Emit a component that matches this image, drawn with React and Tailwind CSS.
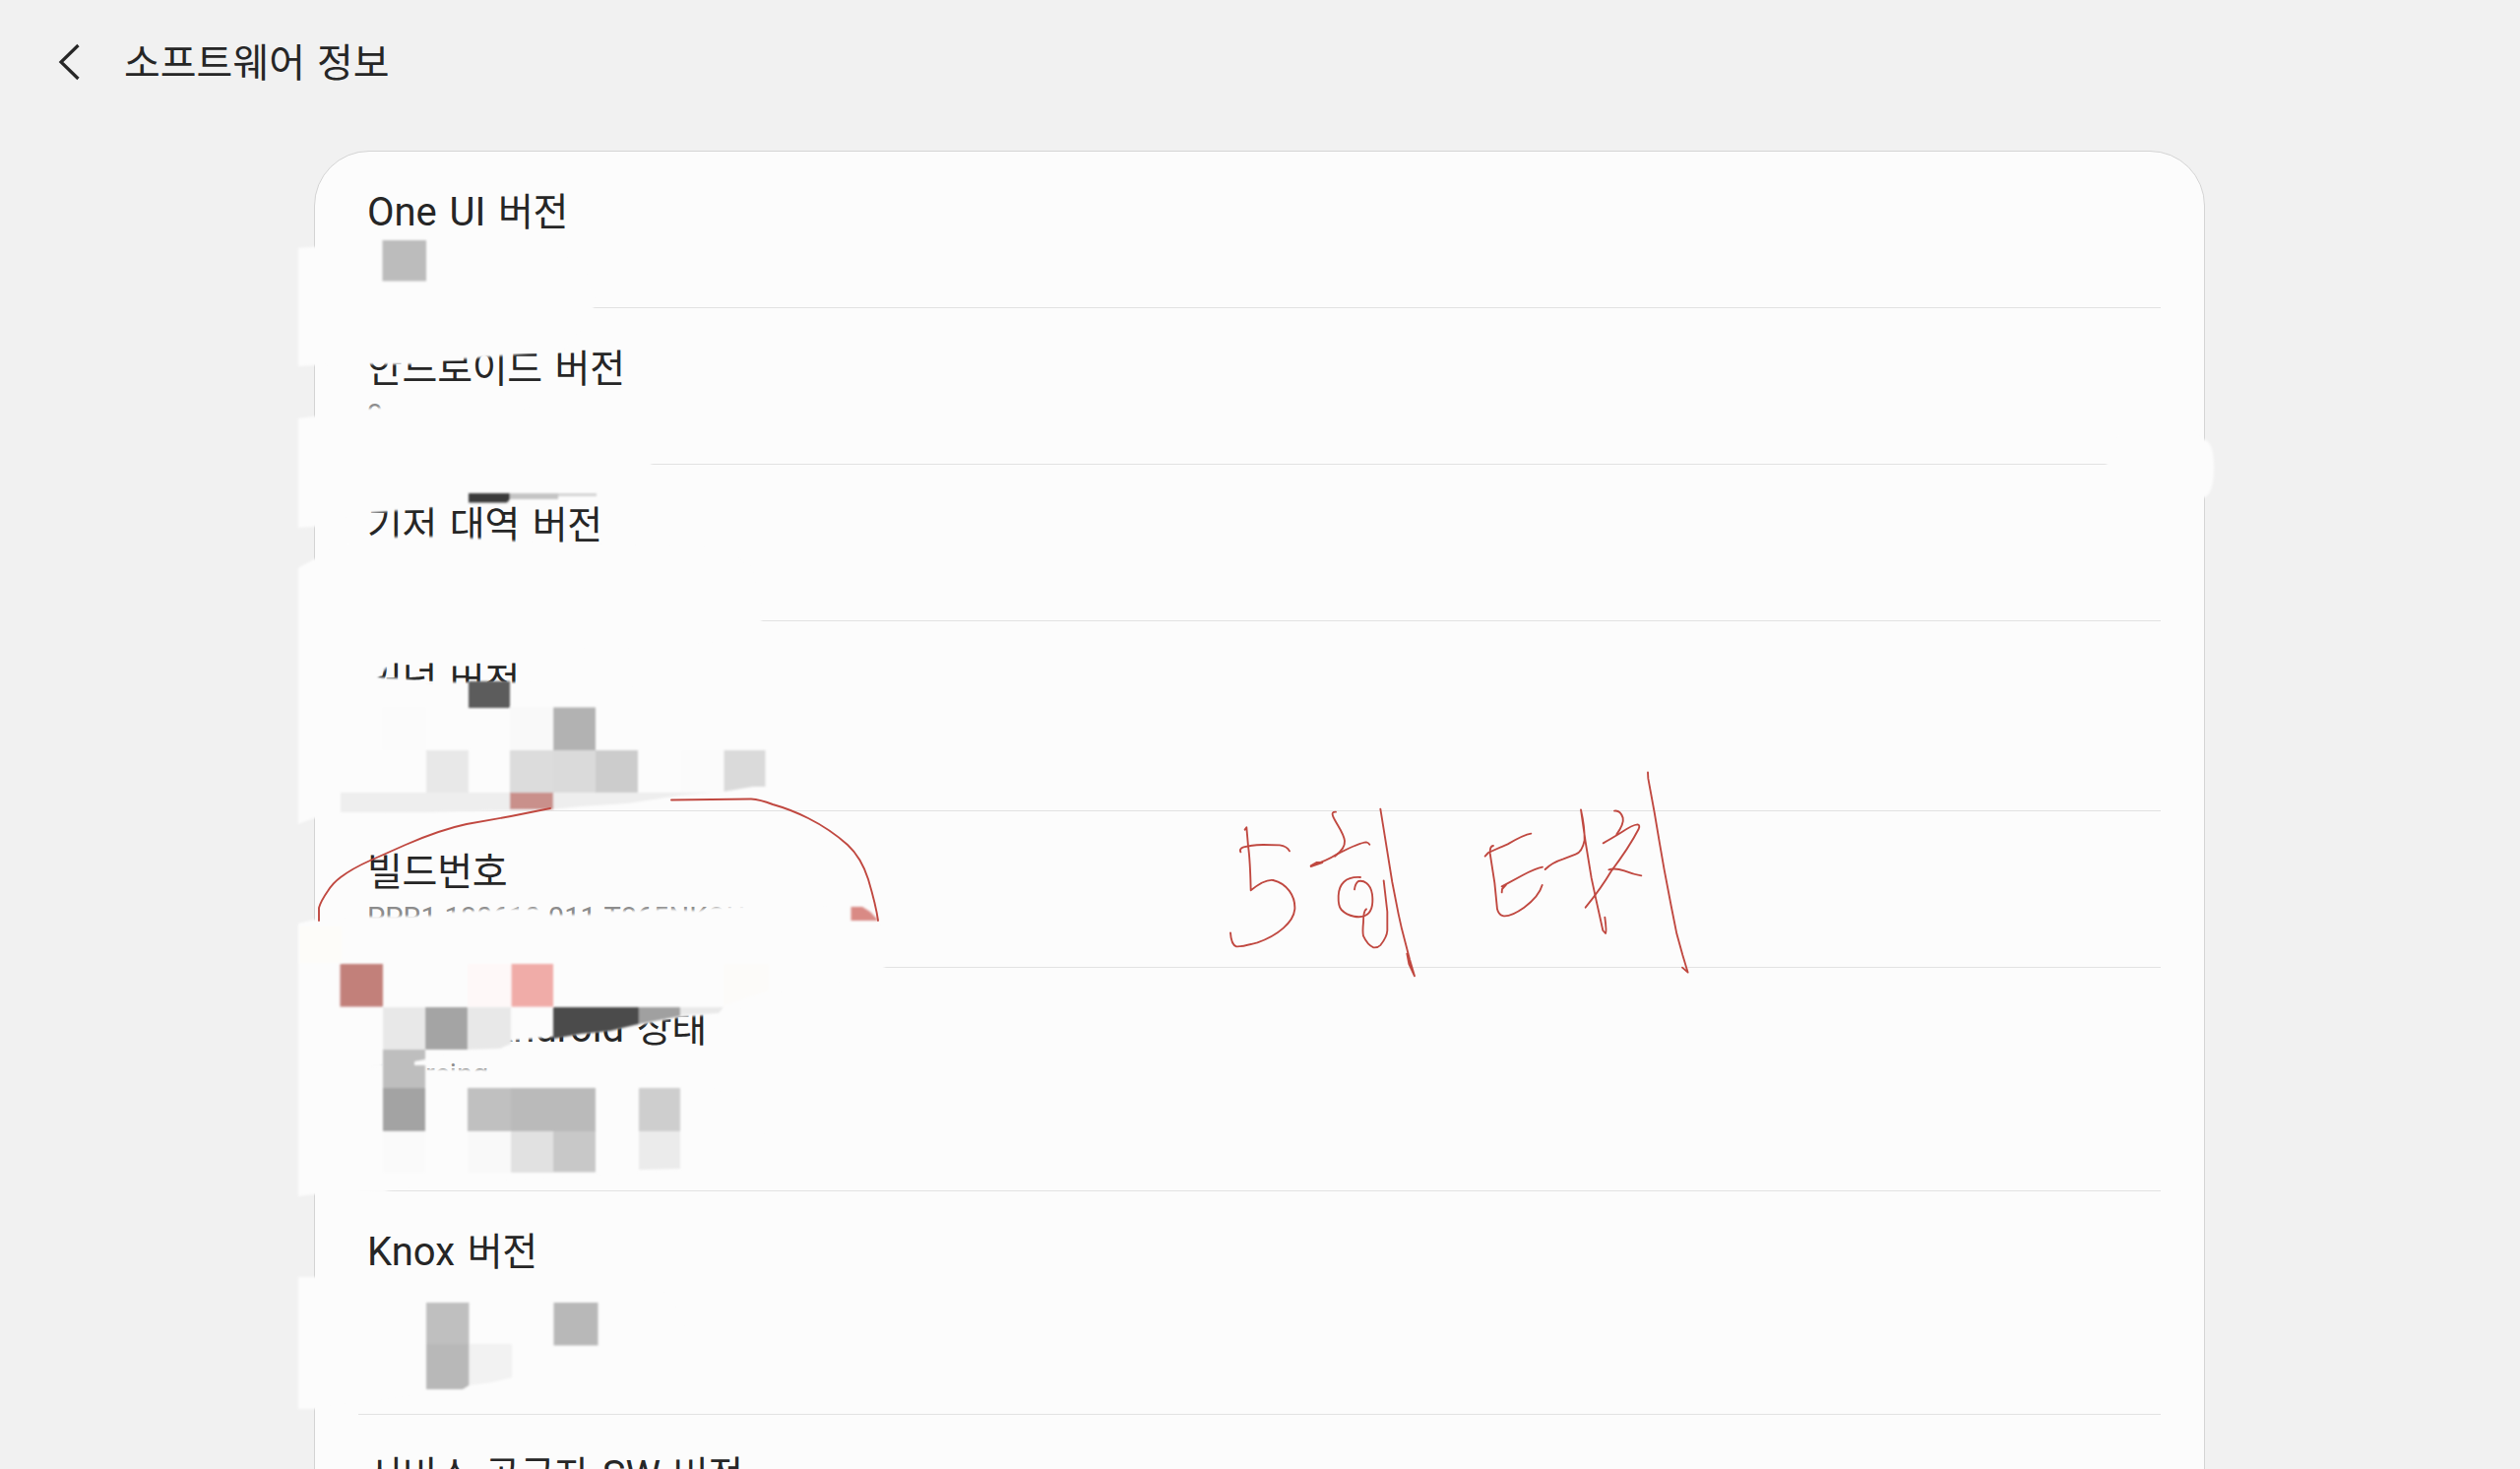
const rows = [
  { title: 'One UI 버전', height: 'h-[159px]' },
  { title: '안드로이드 버전', sub: '9', height: 'h-[159px]' },
  { title: '기저 대역 버전', height: 'h-[159px]' },
  { title: '커널 버전', height: 'h-[193px]' },
  { title: '빌드번호', sub: 'PPR1.180610.011.T865NKOU', height: 'h-[159px]' },
  { title: 'SE for Android 상태', sub: 'Enforcing', height: 'h-[227px]' },
  { title: 'Knox 버전', height: 'h-[227px]' },
  { title: '서비스 공급자 SW 버전', height: 'h-[159px]' },
];

// Eraser strokes that hide the private values
const erased = [
  'M303 252 L330 250 H560 Q603 270 603 315 L574 352 L568 358 L550 358 L525 360 L513 361 L490 363 L450 366 L440 370 H375 L319 371 L303 372Z',
  'M303 425 L319 423 L360 416 L400 413 L640 415 Q662 440 662 480 L650 500 L475 513 L440 515 L410 518 L375 521 L350 526 L319 535 L303 536Z',
  'M303 577 L319 568 L370 546 L440 545 L490 547 L530 550 L740 556 Q774 580 774 620 L773 645 L700 655 L500 664 L400 670 L384 688 L406 689 L420 691 L445 693 H530 L777 700 V799 L735 806 L640 815 L560 822 L430 825 L340 829 L319 831 L303 837Z',
  'M303 938 L319 934 L375 931 L440 930 L460 926 L520 923 L550 923 L560 929 L598 929 L612 925 L640 925 L675 923 L710 925 L720 922 L760 920 L860 919 L893 935 L900 960 L898 990 L780 1010 L733 1030 L691 1033 L649 1041 L600 1049 L562 1053 L519 1057 L508 1066 L440 1074 L421 1078 L350 1088 L303 1100Z',
  'M303 1085 L389 1083 L432 1086 L525 1087 L700 1090 Q780 1130 780 1170 L700 1190 L510 1200 L397 1208 L390 1211 L319 1213 L303 1215Z',
  'M303 1297 H640 Q700 1320 700 1370 L540 1400 L364 1425 L319 1431 H303Z',
  'M2160 434 H2225 L2240 447 Q2249 450 2249 475 Q2249 500 2240 505 L2215 518 H2165 Q2140 500 2140 470 Q2142 446 2160 434Z',
];

const mosaic = [
  ['#bcbcbc', 'M388.5 244 H433 V285.5 H388.5Z'],
  ['#3a3a3a', 'M476 501 H518 V507 L515 510.5 H476Z'],
  ['#c4c4c4', 'M518 501 H567 V507 H518Z'],
  ['#d4d4d4', 'M567 501 H606 V504 H567Z'],
  ['#5c5c5c', 'M476 692 H518 V719 H476Z'],
  ['#fbfbfb', 'M388 718 H433 V762 H388Z'],
  ['#f9f9f9', 'M518 718 H562 V762 H518Z'],
  ['#b2b2b2', 'M562 718.5 H605 V762 H562Z'],
  ['#e8e8e8', 'M433 762 H476 V805 H433Z'],
  ['#dcdcdc', 'M518 762 H562 V805 H518Z'],
  ['#dadada', 'M562 762 H605 V805 H562Z'],
  ['#cccccc', 'M605 762 H648 V805 H605Z'],
  ['#fbfbfb', 'M692 762 H735 V805 H692Z'],
  ['#dadada', 'M735.5 762 H777.5 V799 L765 799 L735.5 804Z'],
  ['#eeeeee', 'M346 805 H725 L690 808 L637 816 L590 819 L560 822 L430 825 H346Z'],
  ['#c9908b', 'M518 805 H562 V822 H518Z'],
  ['#d98a85', 'M864.5 921 H876 L884 926 L891.5 934 V935 H864.5Z'],
  ['#fdfcf9', 'M304 941 H347 V978 H304Z'],
  ['#c2807a', 'M345.5 979 H389 V1022.5 H345.5Z'],
  ['#fef8f8', 'M475 979 H519 V1022.5 H475Z'],
  ['#f0aca8', 'M519.5 979 H562 V1022.5 H519.5Z'],
  ['#fcfbf9', 'M735 979 H781 V1006 L735 1022Z'],
  ['#e8e8e8', 'M389 1023 H432 V1066 H389Z'],
  ['#a4a4a4', 'M432 1023 H475 V1066 H432Z'],
  ['#e8e8e8', 'M475 1023 H519 V1060 L508 1065 L475 1066Z'],
  ['#4c4c4c', 'M562 1023 H649 V1040 L620 1047 L590 1050 L562 1055Z'],
  ['#a0a0a0', 'M649 1023 H691 V1032 L649 1040Z'],
  ['#e9e9e9', 'M691 1023 H735 L730 1029 L691 1031Z'],
  ['#bebebe', 'M389 1066 H432 V1076 L421 1078 V1082 H432 V1105 H389Z'],
  ['#a3a3a3', 'M389 1105 H432 V1149 H389Z'],
  ['#c0c0c0', 'M475 1105 H519 V1149 H475Z'],
  ['#bababa', 'M519 1105 H605 V1149 H519Z'],
  ['#cecece', 'M649 1105 H691 V1149 H649Z'],
  ['#fafafa', 'M389 1149 H432 V1191 H389Z'],
  ['#f9f9f9', 'M475 1149 H519 V1191 H475Z'],
  ['#e1e1e1', 'M519 1149 H562 V1191 H519Z'],
  ['#c8c8c8', 'M562 1149 H605 V1190.5 H562Z'],
  ['#ebebeb', 'M649 1149 H691 V1187 L649 1188Z'],
  ['#bfbfbf', 'M433 1323 H476.5 V1365 H433Z'],
  ['#b8b8b8', 'M433 1365 H476.5 V1407 L470 1411 H433Z'],
  ['#f2f2f2', 'M477 1365 H520 V1399 L500 1404 L477 1407Z'],
  ['#b8b8b8', 'M562.5 1323 H607.5 V1366.5 H562.5Z'],
];

// Handwriting, drawn on a 3x grid
const strokes = [
  'M134 218 L139 211 L144 268 Q150 310 152 403 Q195 368 220 372 C262 382 288 420 286 460 C282 500 235 540 172 562 Q128 575 108 574 Q92 568 90 532',
  'M121 286 Q116 276 130 271 Q160 264 190 264 L240 265 Q262 268 270 283',
  'M411 164 Q397 163 402 176 C410 198 435 226 438 252 Q440 276 408 299',
  'M335 330 L370 318 L352 318 L335 328 Q385 312 412 294 C440 280 480 258 504 256 Q510 257 514 263',
  'M486 363 C440 360 420 385 419 420 Q418 452 428 462 C450 485 485 487 500 480 C522 470 525 440 522 415 C517 380 495 372 480 375 Q470 382 468 400',
  'M504 460 Q495 465 495 500 Q492 530 495 542 Q508 570 526 577 Q540 578 547 570 Q567 545 568 525 V468 L557 373',
  'M547 155 L560 235 L583 378 L602 475 L612 520 L636 613 L651 664 L634 627 L628 596 L642 642',
  'M891 267 Q880 268 881 290 L895 380 L903 460 Q908 480 923 481 Q945 483 985 455 Q1030 422 1040 387',
  'M866 299 L876 288 Q910 273 935 262 Q985 233 1006 230',
  'M917 409 L918 399 L930 386 L917 391 L980 357 Q1020 336 1041 332',
  'M1049 339 Q1070 318 1105 307 L1142 293 Q1162 286 1169 250 Q1170 210 1158 157 L1172 255 L1190 365 L1204 430 L1225 525 L1233 534 Q1237 530 1231 485',
  'M1260 161 Q1278 158 1286 182 Q1290 200 1267 232',
  'M1226 259 Q1250 246 1282 226 Q1315 203 1331 202 Q1339 204 1334 216 Q1305 272 1250 345 Q1220 396 1172 455',
  'M1243 340 Q1262 334 1290 343 Q1318 354 1342 358',
  'M1362 43 L1363 62 L1382 165 L1398 260 L1412 340 L1433 450 L1450 535 L1468 600 L1484 653 L1467 638',
];

// Hangul runs are set a touch smaller than the Latin ones
function Title({ text }) {
  return (
    <p className="whitespace-pre text-[40px] leading-[58px] text-[#262626] [word-spacing:2.75px]">
      {text.split(/([가-힣]+)/).map((part, i) =>
        /[가-힣]/.test(part) ? (
          <span key={i} className="text-[39px] tracking-[-0.3px]">{part}</span>
        ) : (
          part
        )
      )}
    </p>
  );
}

function Row({ row, last }) {
  return (
    <li className={`relative ${row.height} shrink-0 pl-[53px] pt-[33px]`}>
      <Title text={row.title} />
      {row.sub && (
        <p className="mt-[-1px] text-[29px] leading-[36px] text-[#8c8c8c]">{row.sub}</p>
      )}
      {!last && <div className="absolute bottom-0 left-[44px] right-[44px] h-px bg-[#e2e2e2]" />}
    </li>
  );
}

function Annotations() {
  return (
    <svg
      className="pointer-events-none absolute inset-0"
      width="2560"
      height="1492"
      viewBox="0 0 2560 1492"
      fill="none"
    >
      <defs>
        <filter id="soft" x="0" y="0" width="2560" height="1492" filterUnits="userSpaceOnUse">
          <feGaussianBlur stdDeviation="0.9" />
        </filter>
      </defs>
      <g filter="url(#soft)" fill="#fcfcfc">
        {erased.map((d) => (
          <path key={d} d={d} />
        ))}
      </g>
      <g filter="url(#soft)">
        {mosaic.map(([fill, d]) => (
          <path key={d} d={d} fill={fill} />
        ))}
      </g>
      <g stroke="#c04840" strokeWidth="1.9" strokeLinecap="round" strokeLinejoin="round">
        <path d="M324 935 V922 Q326 915 333 905 Q338 897 346 891 Q358 882 376 874 L412 858 C435 848 455 841 474 837 L519 829 L559 821" />
        <path d="M682 812.5 L763 811.5 Q772 812 785 817 Q803 822 821 831 Q843 842 861 858 Q875 871 882 893 Q890 920 892 935" />
        <g transform="translate(1220 770) scale(0.33333)" strokeWidth="5.6">
          {strokes.map((d) => (
            <path key={d} d={d} />
          ))}
        </g>
      </g>
    </svg>
  );
}

export default function App() {
  return (
    <div className="relative flex h-[1492px] w-[2560px] flex-col overflow-hidden bg-[#f1f1f1] font-['Roboto','Noto_Sans_CJK_KR',sans-serif]">
      {/* Title bar */}
      <header className="flex h-[153px] shrink-0 items-start pl-[58px] pt-[36px]">
        <svg className="mt-[7px] h-10 w-6" viewBox="0 0 24 40" fill="none" stroke="#262626" strokeWidth="3.2">
          <path d="M21.500 3 L4 20 L21.500 37" />
        </svg>
        <h1 className="ml-11 text-[40px] leading-[58px] text-[#262626] [word-spacing:2px]">소프트웨어 정보</h1>
      </header>

      {/* Version list */}
      <main className="ml-[319px] w-[1921px] shrink-0 rounded-t-[56px] border border-[#d4d4d4] bg-[#fcfcfc]">
        <ul className="flex flex-col">
          {rows.map((row, i) => (
            <Row key={row.title} row={row} last={i === rows.length - 1} />
          ))}
        </ul>
      </main>

      <Annotations />
    </div>
  );
}
